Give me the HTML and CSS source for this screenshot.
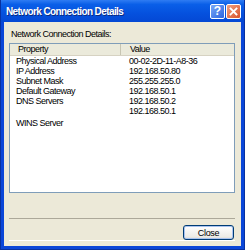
FILE: index.html
```html
<!DOCTYPE html>
<html lang="en">
<head>
    <meta charset="UTF-8">
    <title>Network Connection Details</title>
    <link rel="stylesheet" href="styles.css">
</head>
<body>
    <div class="window">
        <div class="titlebar">
            <span class="title">Network Connection Details</span>
            <div class="title-btns">
                <div class="tbtn help">?</div>
                <div class="tbtn close">
                    <svg width="11" height="11" viewBox="0 0 11 11">
                        <path d="M2.5 2.5 L8.5 8.5 M8.5 2.5 L2.5 8.5" stroke="#fff" stroke-width="1.8" stroke-linecap="square"/>
                    </svg>
                </div>
            </div>
        </div>
        <div class="client">
            <div class="label">Network Connection Details:</div>
            <div class="listbox">
                <div class="list-head">
                    <div class="col-prop">Property</div>
                    <div class="col-val">Value</div>
                </div>
                <div class="rows">
                    <div class="row"><div class="col-prop">Physical Address</div><div class="col-val">00-02-2D-11-A8-36</div></div>
                    <div class="row"><div class="col-prop">IP Address</div><div class="col-val">192.168.50.80</div></div>
                    <div class="row"><div class="col-prop">Subnet Mask</div><div class="col-val">255.255.255.0</div></div>
                    <div class="row"><div class="col-prop">Default Gateway</div><div class="col-val">192.168.50.1</div></div>
                    <div class="row"><div class="col-prop">DNS Servers</div><div class="col-val">192.168.50.2</div></div>
                    <div class="row"><div class="col-prop"></div><div class="col-val">192.168.50.1</div></div>
                    <div class="row"><div class="col-prop">WINS Server</div><div class="col-val"></div></div>
                </div>
            </div>
            <div class="footer">
                <button class="btn">Close</button>
            </div>
        </div>
    </div>
</body>
</html>
```

FILE: styles.css
```css
body {
    margin: 0;
    padding: 0;
    font-family: "Liberation Sans", Arial, sans-serif;
    font-size: 9px;
    letter-spacing: -0.5px;
    color: #000;
}
.window {
    width: 245px;
    height: 250px;
    box-sizing: border-box;
    background-color: #0a46d8;
    border-left: 1px solid #0831a0;
    border-right: 1px solid #0831a0;
    border-bottom: 1px solid #0831a0;
    display: flex;
    flex-direction: column;
    padding: 0 3px 3px 3px;
}
.titlebar {
    height: 22px;
    margin: 0 -3px;
    padding: 0 3px 0 5px;
    background: linear-gradient(to bottom, #2f7cf3 0%, #0a5fe8 20%, #0551de 60%, #0448d4 100%);
    display: flex;
    align-items: center;
    justify-content: space-between;
}
.title {
    color: #fff;
    font-weight: bold;
    font-size: 10px;
    letter-spacing: -0.6px;
    text-shadow: 1px 1px 0 #0a2a80;
}
.title-btns {
    display: flex;
    gap: 1px;
}
.tbtn {
    width: 15px;
    height: 15px;
    box-sizing: border-box;
    border: 1px solid #fff;
    border-radius: 2px;
    display: flex;
    align-items: center;
    justify-content: center;
    color: #fff;
    font-weight: bold;
    font-size: 12px;
    letter-spacing: 0;
}
.help {
    background: linear-gradient(to bottom right, #7aa8f7, #2a64e0);
}
.close {
    background: linear-gradient(to bottom right, #f0a080, #d8522a);
}
.client {
    flex: 1;
    background-color: #ece9d8;
    display: flex;
    flex-direction: column;
    padding: 7px 6px 0 5px;
}
.label {
    padding-left: 2px;
    height: 11px;
    line-height: 11px;
}
.listbox {
    margin-top: 3px;
    height: 150px;
    background-color: #fff;
    border: 1px solid #7f9db9;
    box-sizing: border-box;
}
.list-head {
    display: flex;
    height: 11px;
    line-height: 11px;
    background-color: #ebeadb;
    border-bottom: 1px solid #d6d2c2;
}
.list-head .col-prop {
    border-right: 1px solid #c7c5b2;
    padding-left: 8px;
}
.list-head .col-val {
    padding-left: 9px;
}
.col-prop {
    width: 111px;
    padding-left: 6px;
    box-sizing: border-box;
}
.col-val {
    padding-left: 8px;
}
.row {
    display: flex;
    height: 10px;
    line-height: 10px;
}
.row:last-child {
    margin-top: 2px;
}
.footer {
    margin-top: 25px;
    border-top: 1px solid #aca899;
    box-shadow: 0 1px 0 #fff;
    display: flex;
    justify-content: flex-end;
    padding-top: 6px;
}
.btn {
    width: 51px;
    height: 15px;
    font-family: "Liberation Sans", Arial, sans-serif;
    font-size: 9px;
    letter-spacing: -0.3px;
    background: linear-gradient(to bottom, #ffffff, #ecebe6 85%, #d6d0c5);
    border: 1px solid #003c74;
    border-radius: 3px;
    box-shadow: inset 0 0 0 1px #a9c3ef;
    padding: 0;
    margin-right: 1px;
}
```
